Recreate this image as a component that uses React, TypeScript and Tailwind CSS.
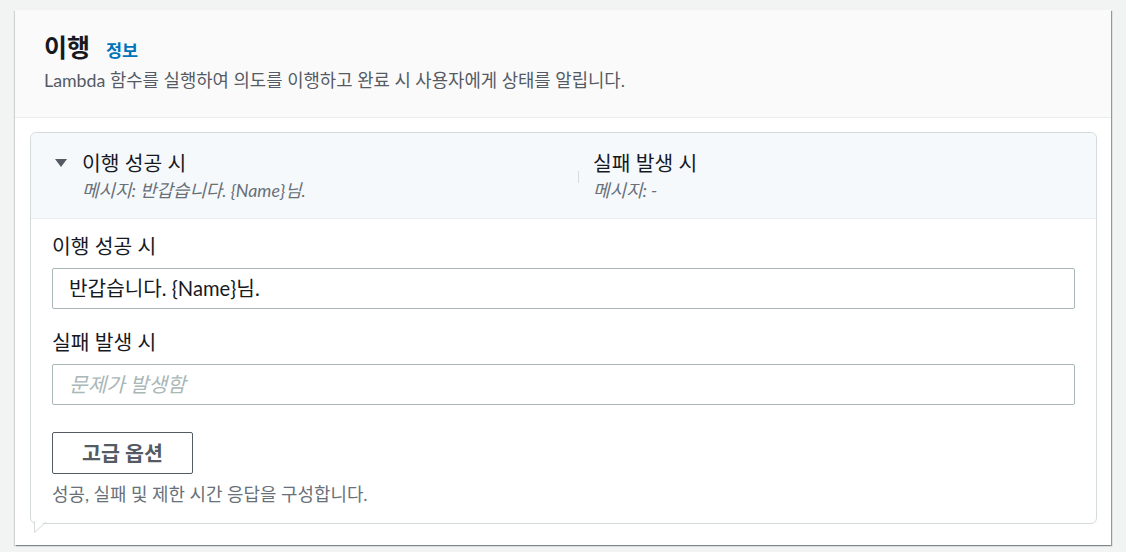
import React from "react";

const font = { fontFamily: 'Lato, "Noto Sans CJK KR", sans-serif' };

export default function App() {
  return (
    <div className="w-[1126px] h-[552px] bg-[#f2f3f3] pt-[10px] pl-[15px]" style={font}>
      <div className="w-[1096px] h-[535px] bg-white shadow-[1px_1px_1px_0_rgba(0,28,36,0.3),1px_1px_1px_0_rgba(0,28,36,0.15),-1px_1px_1px_0_rgba(0,28,36,0.15)] flex flex-col">
        <div className="bg-[#fafafa] border-b border-[#eaeded] h-[108px] px-[29px] pt-[21px]">
          <div className="flex items-baseline gap-[16px]">
            <h2 className="text-[25px] font-bold text-[#16191f] leading-[32px]">이행</h2>
            <span className="text-[17.5px] font-bold text-[#0073bb]">정보</span>
          </div>
          <p className="text-[17.8px] text-[#545b64] leading-[24px] mt-[4px]">
            Lambda 함수를 실행하여 의도를 이행하고 완료 시 사용자에게 상태를 알립니다.
          </p>
        </div>
        <div className="px-[15px] pt-[14px] pr-[14px]">
          <div className="relative border border-[#d5dbdb] rounded-[6px] h-[392px]">
            <div className="bg-[#f6f9fc] border-b border-[#eaeded] h-[86px] rounded-t-[6px] flex">
              <div className="w-[547px] pl-[23px] pt-[16px] flex">
                <svg width="14" height="10" viewBox="0 0 14 10" className="mt-[9px] mr-[14px]">
                  <path d="M1 1 L13 1 L7 9 Z" fill="#545b64" />
                </svg>
                <div>
                  <div className="text-[20.4px] text-[#16191f] leading-[28px]">이행 성공 시</div>
                  <div className="text-[17.9px] italic text-[#687078] leading-[26px]">메시지: 반갑습니다. {"{Name}"}님.</div>
                </div>
              </div>
              <div className="flex items-start pt-[16px]">
                <div className="w-px h-[12px] bg-[#d5dbdb] mt-[22px] mr-[14px]" />
                <div>
                  <div className="text-[20.4px] text-[#16191f] leading-[28px]">실패 발생 시</div>
                  <div className="text-[17.9px] italic text-[#687078] leading-[26px]">메시지: -</div>
                </div>
              </div>
            </div>
            <div className="px-[21px] pt-[13px]">
              <div className="text-[20.4px] text-[#16191f] leading-[28px]">이행 성공 시</div>
              <div className="mt-[8px] h-[41px] border border-[#aab7b8] rounded-[2px] flex items-center px-[16px] text-[20.2px] text-[#16191f]">
                반갑습니다. {"{Name}"}님.
              </div>
              <div className="mt-[19px] text-[20.4px] text-[#16191f] leading-[28px]">실패 발생 시</div>
              <div className="mt-[8px] h-[41px] border border-[#aab7b8] rounded-[2px] flex items-center px-[16px] text-[20.3px] italic text-[#aab7b8]">
                문제가 발생함
              </div>
              <button className="mt-[27px] w-[141px] h-[42px] border border-[#545b64] rounded-[2px] text-[20.6px] font-bold text-[#545b64] bg-white">
                고급 옵션
              </button>
              <div className="mt-[8px] text-[17.9px] text-[#687078] leading-[24px]">성공, 실패 및 제한 시간 응답을 구성합니다.</div>
            </div>
            <svg width="16" height="14" viewBox="0 0 16 14" className="absolute left-[2px] bottom-[-12px]">
              <path d="M0 0 L1 0 L1 11 L11 1" fill="#ffffff" />
              <path d="M1.5 0 L1.5 11.5 L13 1" fill="none" stroke="#d5dbdb" strokeWidth="1" />
            </svg>
          </div>
        </div>
      </div>
    </div>
  );
}
